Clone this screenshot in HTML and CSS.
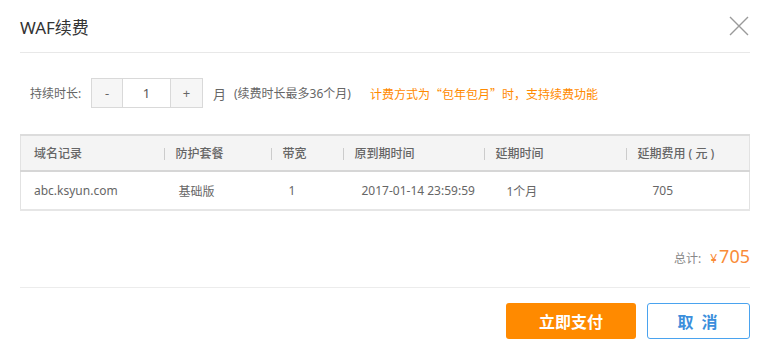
FILE: index.html
```html
<!DOCTYPE html>
<html lang="zh-CN">
<head>
  <meta charset="UTF-8">
  <title>WAF续费</title>
  <link rel="stylesheet" href="styles.css">
</head>
<body>

  <div class="dialog">
    <div class="dialog-header">
      <span class="dialog-title">WAF续费</span>
      <a href="#" class="close-btn" title="关闭">
        <svg width="20" height="20" viewBox="0 0 20 20">
          <path d="M1 1 L19 19 M19 1 L1 19" stroke="#9a9a9a" stroke-width="1.4" fill="none"/>
        </svg>
      </a>
    </div>

    <div class="duration-row">
      <span class="label">持续时长:</span>
      <div class="stepper">
        <button class="step-btn" id="minus">-</button>
        <input class="step-input" id="months" type="text" value="1">
        <button class="step-btn plus" id="plus">+</button>
      </div>
      <span class="unit">月</span>
      <span class="hint">(续费时长最多36个月)</span>
      <span class="notice">计费方式为“包年包月”时，支持续费功能</span>
    </div>

    <table class="renew-table">
      <colgroup>
        <col style="width:143px">
        <col style="width:107px">
        <col style="width:72px">
        <col style="width:141px">
        <col style="width:142px">
        <col>
      </colgroup>
      <thead>
        <tr>
          <th>域名记录</th>
          <th>防护套餐</th>
          <th>带宽</th>
          <th>原到期时间</th>
          <th>延期时间</th>
          <th>延期费用 ( 元 )</th>
        </tr>
      </thead>
      <tbody>
        <tr>
          <td>abc.ksyun.com</td>
          <td>基础版</td>
          <td>1</td>
          <td>2017-01-14 23:59:59</td>
          <td id="period">1个月</td>
          <td id="fee">705</td>
        </tr>
      </tbody>
    </table>

    <div class="total">
      <span class="total-label">总计:</span>
      <span class="total-price"><small>¥</small><span id="total">705</span></span>
    </div>

    <div class="dialog-footer">
      <button class="pay-btn">立即支付</button>
      <button class="cancel-btn">取 消</button>
    </div>
  </div>

  <script>
    document.addEventListener('DOMContentLoaded', () => {
      const price = 705;
      const input = document.getElementById('months');

      function update() {
        let n = parseInt(input.value, 10) || 1;
        if (n < 1) n = 1;
        if (n > 36) n = 36;
        input.value = n;
        document.getElementById('period').textContent = n + '个月';
        document.getElementById('fee').textContent = price * n;
        document.getElementById('total').textContent = price * n;
      }

      document.getElementById('minus').onclick = () => { input.value = +input.value - 1; update(); };
      document.getElementById('plus').onclick = () => { input.value = +input.value + 1; update(); };
      input.addEventListener('change', update);
    });
  </script>

</body>
</html>
```

FILE: styles.css
```css
body {
  margin: 0;
  font-family: 'Noto Sans', 'Noto Sans CJK SC', sans-serif;
  background-color: #fff;
  color: #666;
  font-size: 12px;
}

.dialog {
  width: 730px;
  padding: 0 20px;
}

.dialog-header {
  height: 52px;
  display: flex;
  justify-content: space-between;
  align-items: center;
  border-bottom: 1px solid #e8e8e8;
}

.dialog-title {
  font-size: 17px;
  color: #333;
  padding-top: 1px;
}

.close-btn {
  display: block;
  width: 20px;
  height: 20px;
  margin-right: 1px;
  margin-bottom: 1px;
}

.duration-row {
  display: flex;
  align-items: center;
  height: 30px;
  margin-top: 25px;
  padding-left: 10px;
}

.label {
  width: 61px;
}

.stepper {
  display: flex;
  height: 30px;
  border: 1px solid #d9d9d9;
  box-sizing: border-box;
}

.step-btn {
  width: 30px;
  padding: 0;
  border: none;
  background: #f6f6f6;
  color: #666;
  font-family: inherit;
  font-size: 13px;
  cursor: pointer;
}

.step-btn.plus {
  width: 31px;
}

.step-input {
  width: 47px;
  padding: 0;
  border: none;
  border-left: 1px solid #d9d9d9;
  border-right: 1px solid #d9d9d9;
  text-align: center;
  color: #555;
  font-family: inherit;
  font-size: 13px;
  outline: none;
}

.unit {
  margin-left: 10px;
  font-size: 13px;
}

.hint {
  margin-left: 8px;
}

.notice {
  margin-left: 19px;
  color: #ff8a00;
  font-family: 'Noto Sans CJK SC', sans-serif;
}

.renew-table {
  width: 730px;
  margin-top: 26px;
  border-collapse: collapse;
  table-layout: fixed;
  border: 1px solid #e2e2e2;
  border-top: 2px solid #dcdcdc;
  border-bottom: 2px solid #e6e6e6;
}

.renew-table th {
  position: relative;
  height: 34px;
  padding: 0 0 0 12px;
  background: #f4f4f4;
  border-bottom: 2px solid #d6d6d6;
  text-align: left;
  font-weight: 500;
  color: #666;
}

.renew-table th:first-child {
  padding-left: 13px;
}

.renew-table th + th::before {
  content: '';
  position: absolute;
  left: 0;
  top: 12px;
  height: 12px;
  border-left: 1px solid #ccc;
}

.renew-table td {
  height: 37px;
  padding: 0;
  color: #666;
}

.renew-table td:nth-child(1) { padding-left: 13px; }
.renew-table td:nth-child(2) { padding-left: 15px; }
.renew-table td:nth-child(3) { padding-left: 18px; }
.renew-table td:nth-child(4) { padding-left: 19px; }
.renew-table td:nth-child(5) { padding-left: 23px; }
.renew-table td:nth-child(6) { padding-left: 27px; }

.total {
  display: flex;
  justify-content: flex-end;
  align-items: baseline;
  height: 77px;
  box-sizing: border-box;
  padding-top: 33px;
  border-bottom: 1px solid #ececec;
}

.total-label {
  color: #888;
  margin-right: 9px;
}

.total-price {
  color: #f98b37;
  font-size: 18px;
}

.total-price small {
  font-size: 12px;
  margin-right: 2px;
}

.dialog-footer {
  display: flex;
  justify-content: flex-end;
  gap: 11px;
  margin-top: 15px;
}

.pay-btn {
  width: 130px;
  height: 36px;
  background-color: #ff8a00;
  color: #fff;
  border: none;
  border-radius: 3px;
  font-family: inherit;
  font-size: 16px;
  font-weight: bold;
  cursor: pointer;
}

.cancel-btn {
  width: 103px;
  height: 36px;
  background: #fff;
  color: #3c8fdc;
  border: 1px solid #4aa3ef;
  border-radius: 3px;
  font-family: inherit;
  font-size: 16px;
  font-weight: bold;
  letter-spacing: 2px;
  cursor: pointer;
}
```
